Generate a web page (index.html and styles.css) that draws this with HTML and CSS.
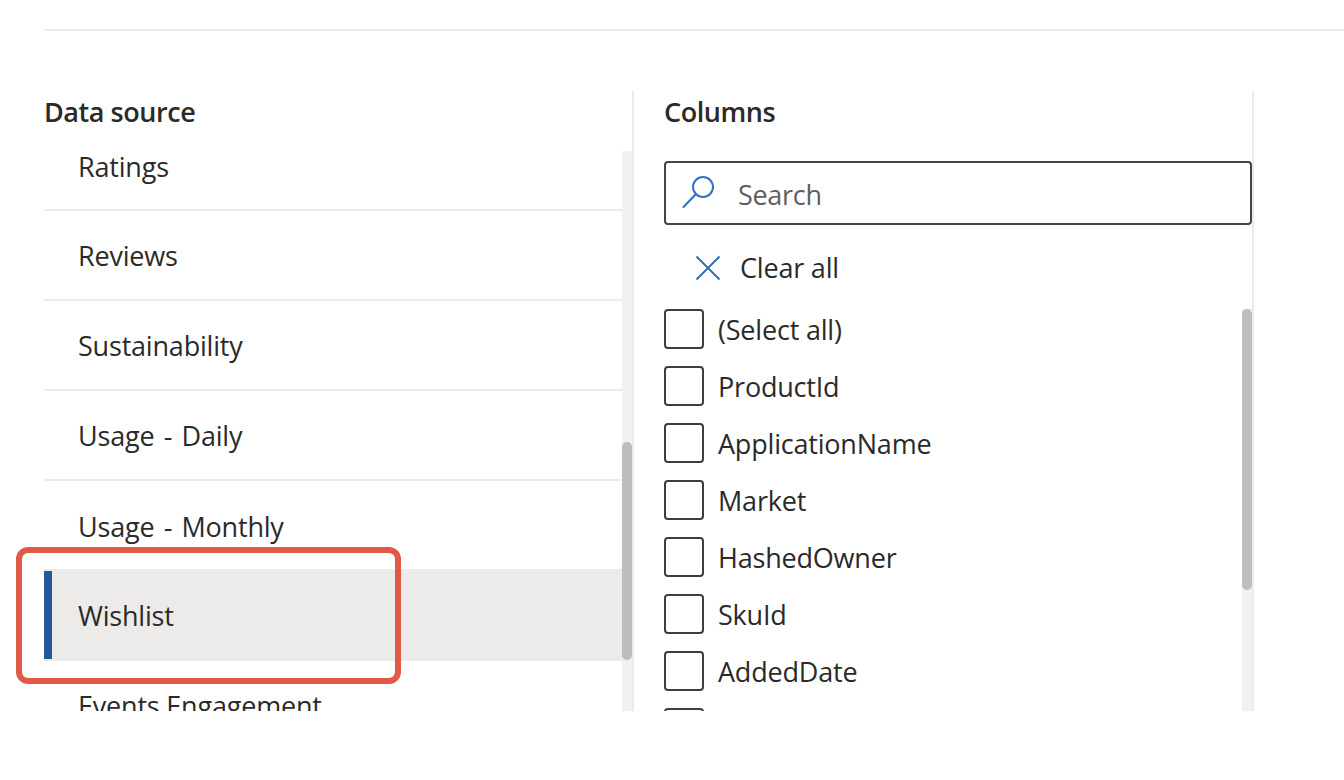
FILE: index.html
```html
<!DOCTYPE html>
<html lang="en">
<head>
    <meta charset="UTF-8">
    <title>Data source</title>
    <link rel="stylesheet" href="styles.css">
</head>
<body>
    <div class="top-rule"></div>

    <div class="panels">
        <div class="source-panel">
            <h2 class="panel-title">Data source</h2>
            <div class="source-body">
                <div class="source-list">
                    <div class="source-row first-row">Ratings</div>
                    <div class="source-row">Reviews</div>
                    <div class="source-row">Sustainability</div>
                    <div class="source-row wide-words">Usage - Daily</div>
                    <div class="source-row before-selected wide-words">Usage - Monthly</div>
                    <div class="source-row selected">Wishlist</div>
                    <div class="source-row no-line">Events Engagement</div>
                </div>
                <div class="track"><div class="thumb source-thumb"></div></div>
            </div>
        </div>

        <div class="columns-panel">
            <h2 class="panel-title">Columns</h2>
            <div class="search-box">
                <svg class="search-icon" width="34" height="34" viewBox="0 0 34 34" fill="none" stroke="#2f72c4" stroke-width="2">
                    <circle cx="21" cy="11" r="10"/>
                    <path d="M14 18 L1.5 31" stroke-linecap="round"/>
                </svg>
                <span class="search-text">Search</span>
            </div>
            <div class="clear-row">
                <svg width="26" height="26" viewBox="0 0 26 26" fill="none" stroke="#2b6cb8" stroke-width="1.8">
                    <path d="M1.5 1.5 L24.5 24.5 M24.5 1.5 L1.5 24.5"/>
                </svg>
                <span>Clear all</span>
            </div>
            <div class="column-body">
                <div class="column-list">
                    <label class="check-row"><span class="box"></span>(Select all)</label>
                    <label class="check-row"><span class="box"></span>ProductId</label>
                    <label class="check-row"><span class="box"></span>ApplicationName</label>
                    <label class="check-row"><span class="box"></span>Market</label>
                    <label class="check-row"><span class="box"></span>HashedOwner</label>
                    <label class="check-row"><span class="box"></span>SkuId</label>
                    <label class="check-row"><span class="box"></span>AddedDate</label>
                    <label class="check-row"><span class="box"></span></label>
                </div>
                <div class="track column-track"><div class="thumb column-thumb"></div></div>
            </div>
        </div>
    </div>

    <div class="callout"></div>
</body>
</html>
```

FILE: styles.css
```css
body {
    font-family: "Open Sans", "Noto Sans", sans-serif;
    background-color: #fff;
    color: #2b2a29;
    margin: 0;
    height: 780px;
    overflow: hidden;
    position: relative;
}

.top-rule {
    height: 2px;
    margin: 29px 0 0 44px;
    background-color: #edebe9;
}

.panels {
    display: flex;
    margin: 60px 0 0 44px;
    height: 620px;
}

.panel-title {
    font-size: 27px;
    line-height: 42px;
    font-weight: 600;
    letter-spacing: -0.45px;
    margin: 0;
}

.source-panel {
    width: 588px;
    border-right: 2px solid #edebe9;
    height: 620px;
    display: flex;
    flex-direction: column;
}

.source-panel .panel-title {
    height: 60px;
    flex: none;
}

.source-body {
    display: flex;
    height: 560px;
    overflow: hidden;
}

.source-list {
    width: 578px;
    overflow: hidden;
}

.source-row {
    height: 90px;
    line-height: 90px;
    padding-left: 34px;
    font-size: 27px;
    letter-spacing: -0.2px;
    box-sizing: border-box;
    border-bottom: 2px solid #edebe9;
}

.first-row {
    margin-top: -29px;
    height: 89px;
    line-height: 90px;
}

.wide-words {
    word-spacing: 2.5px;
}

.before-selected {
    height: 88px;
    line-height: 92px;
    border-bottom: none;
}

.no-line {
    border-bottom: none;
}

.selected {
    height: 92px;
    line-height: 94px;
    border-bottom: none;
    background-color: #edebe9;
    position: relative;
}

.selected::before {
    content: "";
    position: absolute;
    left: 0;
    top: 2px;
    bottom: 2px;
    width: 8px;
    background-color: #25589b;
}

.track {
    width: 10px;
    flex: none;
    background-color: #f1f1f1;
}

.thumb {
    background-color: #bdbdbd;
    border-radius: 5px;
}

.source-thumb {
    margin-top: 291px;
    height: 218px;
}

.columns-panel {
    width: 588px;
    padding-left: 30px;
    border-right: 2px solid #edebe9;
    height: 620px;
    display: flex;
    flex-direction: column;
}

.columns-panel .panel-title {
    height: 70px;
    flex: none;
}

.search-box {
    height: 64px;
    box-sizing: border-box;
    border: 2px solid #444;
    border-radius: 4px;
    display: flex;
    align-items: center;
    padding-left: 16px;
    flex: none;
}

.search-icon {
    flex: none;
}

.search-text {
    margin-left: 22px;
    padding-top: 2px;
    font-size: 27px;
    letter-spacing: -0.3px;
    color: #605e5c;
}

.clear-row {
    display: flex;
    align-items: center;
    gap: 19px;
    height: 71px;
    padding: 14px 0 0 31px;
    flex: none;
    box-sizing: border-box;
    font-size: 27px;
    letter-spacing: -0.2px;
}

.column-body {
    display: flex;
    flex: 1;
    overflow: hidden;
}

.column-list {
    flex: 1;
    overflow: hidden;
    padding-top: 13px;
}

.check-row {
    display: flex;
    align-items: center;
    height: 40px;
    margin-bottom: 17px;
    gap: 14px;
    font-size: 27px;
    letter-spacing: -0.2px;
}

.box {
    width: 40px;
    height: 40px;
    box-sizing: border-box;
    border: 2px solid #3f3e3d;
    border-radius: 4px;
    flex: none;
}

.column-track {
    margin-top: 13px;
}

.column-thumb {
    height: 281px;
}

.callout {
    position: absolute;
    left: 16px;
    top: 547px;
    width: 385px;
    height: 137px;
    box-sizing: border-box;
    border: 6px solid #e05a47;
    border-radius: 12px;
}
```
